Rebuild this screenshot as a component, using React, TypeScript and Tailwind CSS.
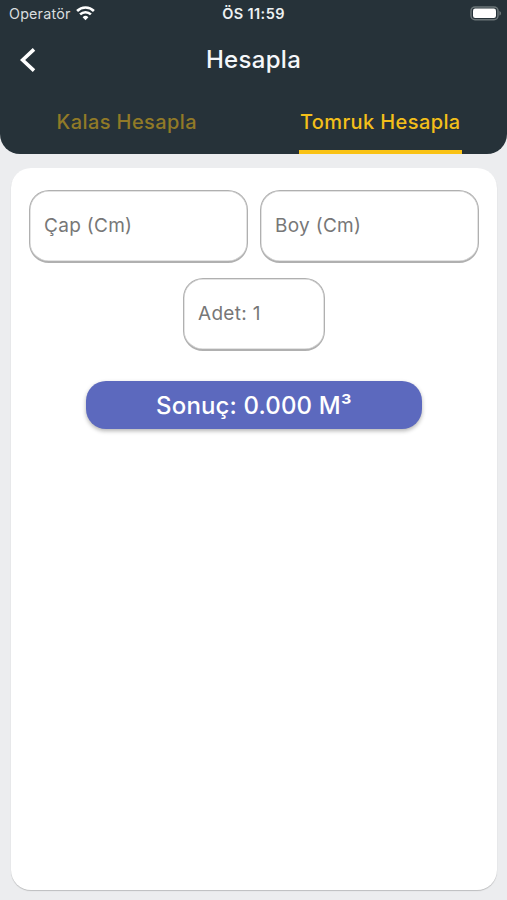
import { useState } from 'react';
import clsx from 'clsx';

const tabs = [
  { id: 'kalas', label: 'Kalas Hesapla' },
  { id: 'tomruk', label: 'Tomruk Hesapla' },
];

function WifiIcon() {
  return (
    <svg width="19" height="15" viewBox="0 0 19 15" fill="none" stroke="#fff" strokeWidth="2.6">
      <path d="M1.1 5a12 12 0 0 1 16.8 0" />
      <path d="M4.1 8.4a7.7 7.7 0 0 1 10.8 0" />
      <path d="M9.5 14.2 6.6 11.3a4.1 4.1 0 0 1 5.8 0Z" fill="#fff" stroke="none" />
    </svg>
  );
}

function BatteryIcon() {
  return (
    <svg width="32" height="15" viewBox="0 0 32 15">
      <rect x="1" y="0.9" width="27" height="12.8" rx="4" fill="none" stroke="#6b7578" strokeWidth="1.5" />
      <rect x="3" y="2.6" width="23" height="9.4" rx="2.2" fill="#fff" />
      <path d="M29.4 5c2.2.8 2.2 3.8 0 4.6Z" fill="#6b7578" />
    </svg>
  );
}

function StatusBar() {
  return (
    <div className="grid h-[27px] grid-cols-3 items-center px-[7px] text-white">
      <div className="flex items-center gap-[5px] pl-[2px]">
        <span className="text-[14.3px] tracking-[0.2px] text-[#d9dddf]">Operatör</span>
        <WifiIcon />
      </div>
      <span className="text-center text-[14.5px] font-semibold tracking-[0.4px] text-[#edf1f2]">ÖS 11:59</span>
      <div className="-mr-[2px] flex justify-end">
        <BatteryIcon />
      </div>
    </div>
  );
}

function Field({ label, className }: { label: string; className?: string }) {
  return (
    <input
      placeholder={label}
      className={clsx(
        'h-[73px] rounded-[20px] border border-b-2 border-[#b0b0b0] bg-white px-[14px] pb-px text-[19px] tracking-[0.3px] shadow-[inset_0_0_0_0.5px_#c8c8c8] outline-none placeholder:text-[#777]',
        className,
      )}
    />
  );
}

export default function App() {
  const [active, setActive] = useState('tomruk');

  return (
    <div className="flex h-[900px] flex-col bg-[#ecedef] font-['Inter',sans-serif]">
      <header className="h-[154px] rounded-b-[20px] bg-[#263239]">
        <StatusBar />
        <div className="grid h-[65px] grid-cols-3 items-center">
          <button className="pl-5" aria-label="Geri">
            <svg width="16" height="24" viewBox="0 0 16 24" fill="none" stroke="#fff" strokeWidth="3.6">
              <path d="M14 1.4 2.6 12 14 22.6" />
            </svg>
          </button>
          <h1 className="text-center text-[24px] font-medium tracking-[0.3px] text-[#f5f7fa]">Hesapla</h1>
        </div>
        <nav className="grid h-[62px] grid-cols-2 justify-items-center">
          {tabs.map((tab) => (
            <button
              key={tab.id}
              onClick={() => setActive(tab.id)}
              className={clsx(
                'h-full border-b-4 px-px pt-[2px] text-[20px] font-medium tracking-[0.4px]',
                active === tab.id ? 'border-[#f9c215] text-[#f3bf1a]' : 'border-transparent text-[#917a27]',
              )}
            >
              {tab.label}
            </button>
          ))}
        </nav>
      </header>

      <main className="mt-[14px] mr-[10px] mb-[10px] ml-[11px] flex flex-1 flex-col items-center rounded-[20px] bg-white px-[18px] pt-[22px] shadow-[0_1px_1px_rgba(0,0,0,0.2)]">
        <div className="grid w-full grid-cols-2 gap-3">
          <Field label="Çap (Cm)" className="w-full" />
          <Field label="Boy (Cm)" className="w-full" />
        </div>
        <Field label="Adet: 1" className="mt-[15px] w-[142px]" />
        <button className="mt-[30px] h-12 w-[336px] rounded-[20px] bg-[#5c69be] pt-px text-[24px] font-medium tracking-[0.15px] text-white shadow-[0_2px_4px_rgba(0,0,0,0.3)]">
          Sonuç: 0.000 M³
        </button>
      </main>
    </div>
  );
}
